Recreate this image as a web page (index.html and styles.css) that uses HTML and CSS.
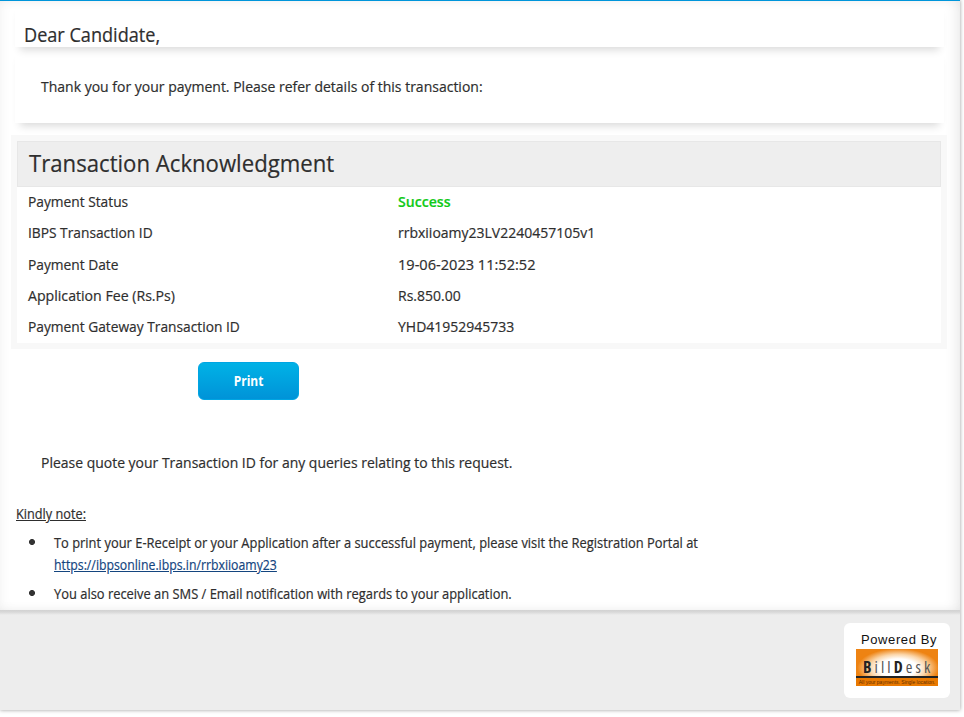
FILE: index.html
```html
<!DOCTYPE html>
<html lang="en">
<head>
<meta charset="utf-8">
<title>Transaction Acknowledgment</title>
<link rel="stylesheet" href="styles.css">
</head>
<body>
<div class="page">
  <main class="content">
    <h2 class="greeting"><span class="narrow">Dear Candidate,</span></h2>
    <p class="intro"><span class="narrow">Thank you for your payment. Please refer details of this transaction:</span></p>
    <section class="panel">
      <h1 class="panel-title"><span class="narrow">Transaction Acknowledgment</span></h1>
      <dl class="details">
        <dt><span class="narrow">Payment Status</span></dt><dd class="success"><span class="narrow">Success</span></dd>
        <dt><span class="narrow">IBPS Transaction ID</span></dt><dd><span class="narrow">rrbxiioamy23LV2240457105v1</span></dd>
        <dt><span class="narrow">Payment Date</span></dt><dd class="date"><span class="narrow">19-06-2023 11:52:52</span></dd>
        <dt class="fee"><span class="narrow">Application Fee (Rs.Ps)</span></dt><dd><span class="narrow">Rs.850.00</span></dd>
        <dt><span class="narrow">Payment Gateway Transaction ID</span></dt><dd><span class="narrow">YHD41952945733</span></dd>
      </dl>
    </section>
    <button class="print" type="button"><span>Print</span></button>
    <p class="quote"><span class="narrow">Please quote your Transaction ID for any queries relating to this request.</span></p>
    <h3 class="note-title"><span class="narrow">Kindly note:</span></h3>
    <ul class="notes">
      <li><span class="narrow">To print your E-Receipt or your Application after a successful payment, please visit the Registration Portal at</span><br><a class="narrow" href="#">https://ibpsonline.ibps.in/rrbxiioamy23</a></li>
      <li><span class="narrow">You also receive an SMS / Email notification with regards to your application.</span></li>
    </ul>
  </main>
  <footer class="footer">
    <div class="badge">
      <span class="powered">Powered By</span>
      <div class="logo">
        <div class="logo-name"><b>B</b>ill<b>D</b>esk</div>
        <div class="logo-tag">All your payments. Single location.</div>
      </div>
    </div>
  </footer>
</div>
</body>
</html>
```
FILE: styles.css
```css
* { box-sizing: border-box; }
body {
  height: 717px;
  margin: 0;
  overflow: hidden;
  background: #fff;
  color: #2e2e2e;
  font-family: "Open Sans", "Noto Sans", sans-serif;
  font-size: 15px;
  font-weight: 500;
}
h1, h2, h3, p, dl, dd, ul { margin: 0; padding: 0; font-weight: inherit; }
.narrow {
  display: inline-block;
  transform: scaleX(0.933);
  transform-origin: 0 50%;
  white-space: nowrap;
  -webkit-text-stroke: 0.2px currentColor;
}
.page {
  width: 960px;
  height: 710px;
  border-top: 1px solid #0095da;
  box-shadow: 0 0 4px rgba(0, 0, 0, 0.4);
}
.content {
  height: 609px;
  padding: 0 13px 0 11px;
  background: #fff;
  box-shadow: inset -6px 0 14px -4px rgba(0, 0, 0, 0.1), inset 4px 0 12px -2px rgba(0, 0, 0, 0.04);
}
.greeting, .intro {
  margin: 0 3px 0 4px;
  box-shadow: 0 8px 8px -5px rgba(0, 0, 0, 0.15);
}
.greeting {
  height: 46px;
  padding: 20px 0 0 9px;
  font-size: 20px;
  font-weight: 400;
  line-height: 27px;
}
.greeting .narrow { transform: scaleX(0.905); }
.intro {
  height: 76px;
  padding: 28px 0 0 26px;
  line-height: 22px;
}
.panel {
  height: 214px;
  margin-top: 12px;
  border: 6px solid #f8f8f8;
  background: #fff;
}
.panel-title {
  height: 46px;
  padding: 4px 0 0 11px;
  background: #eee;
  border: 1px solid #e7e7e7;
  font-size: 24px;
  font-weight: 400;
  line-height: 34px;
}
.panel-title .narrow { transform: scaleX(0.923); }
.details {
  display: grid;
  grid-template-columns: 370px 1fr;
  grid-auto-rows: 31.25px;
  padding-left: 11px;
  line-height: 29px;
}
.details dt .narrow { transform: scaleX(0.917); }
.details .fee .narrow { transform: scaleX(0.942); }
.details .date .narrow { transform: scaleX(0.972); }
.details .success { color: #10ca18; font-weight: 600; }
.details .success .narrow { transform: scaleX(0.94); }
.print {
  display: block;
  width: 101px;
  height: 38px;
  margin: 13px 0 0 187px;
  padding: 0 0 2px;
  border: 1px solid #00a5e3;
  border-radius: 6px;
  background: linear-gradient(#00b2e6, #0093d8);
  color: #fff;
  font: inherit;
  font-weight: 700;
}
.print span { display: inline-block; transform: scaleX(0.8); }
.quote { margin: 51px 0 0 30px; line-height: 22px; }
.quote .narrow { transform: scaleX(0.931); }
.note-title {
  margin: 30px 0 0 5px;
  font-size: 14px;
  line-height: 22px;
}
.note-title .narrow { transform: scaleX(0.909); text-decoration: underline; }
.notes {
  margin: 7px 0 0 5px;
  font-size: 14px;
  line-height: 22px;
  list-style: none;
}
.notes .narrow { transform: scaleX(0.921); vertical-align: top; }
.notes li {
  margin-bottom: 7px;
  padding-left: 38px;
  background: radial-gradient(circle at 16px 10px, #333 2.6px, transparent 3.4px);
}
.notes a.narrow { color: #14457f; transform: scaleX(0.877); }
.footer {
  display: flex;
  justify-content: flex-end;
  height: 100px;
  padding: 13px 10px 0 0;
  background: linear-gradient(#d2d2d2, #d8d8d8 2px, #ededed 5px);
}
.badge {
  width: 106px;
  height: 75px;
  padding: 8px 12px 0;
  border-radius: 6px;
  background: #fff;
  color: #111;
  font-family: "Liberation Sans", Arial, sans-serif;
  font-weight: 400;
}
.powered {
  display: block;
  height: 18px;
  padding-left: 5px;
  font-size: 13px;
  line-height: 18px;
  letter-spacing: 0.6px;
  white-space: nowrap;
}
.logo {
  width: 82px;
  height: 37px;
  background: radial-gradient(ellipse 40px 19px at 42px 19px, #fff 48%, #fbd5a8 72%, #ee8312 102%);
  overflow: hidden;
}
.logo-name {
  height: 27px;
  padding: 5px 0 0 7px;
  font-family: "Open Sans", sans-serif;
  font-size: 16px;
  font-stretch: 75%;
  line-height: 26px;
  letter-spacing: 3.1px;
  color: #555;
  white-space: nowrap;
}
.logo-name b { color: #222; font-weight: 700; }
.logo-tag {
  height: 10px;
  border-top: 2px solid #222;
  background: #e97900;
  color: #663000;
  font-size: 5px;
  line-height: 8px;
  text-align: center;
  white-space: nowrap;
}
```
